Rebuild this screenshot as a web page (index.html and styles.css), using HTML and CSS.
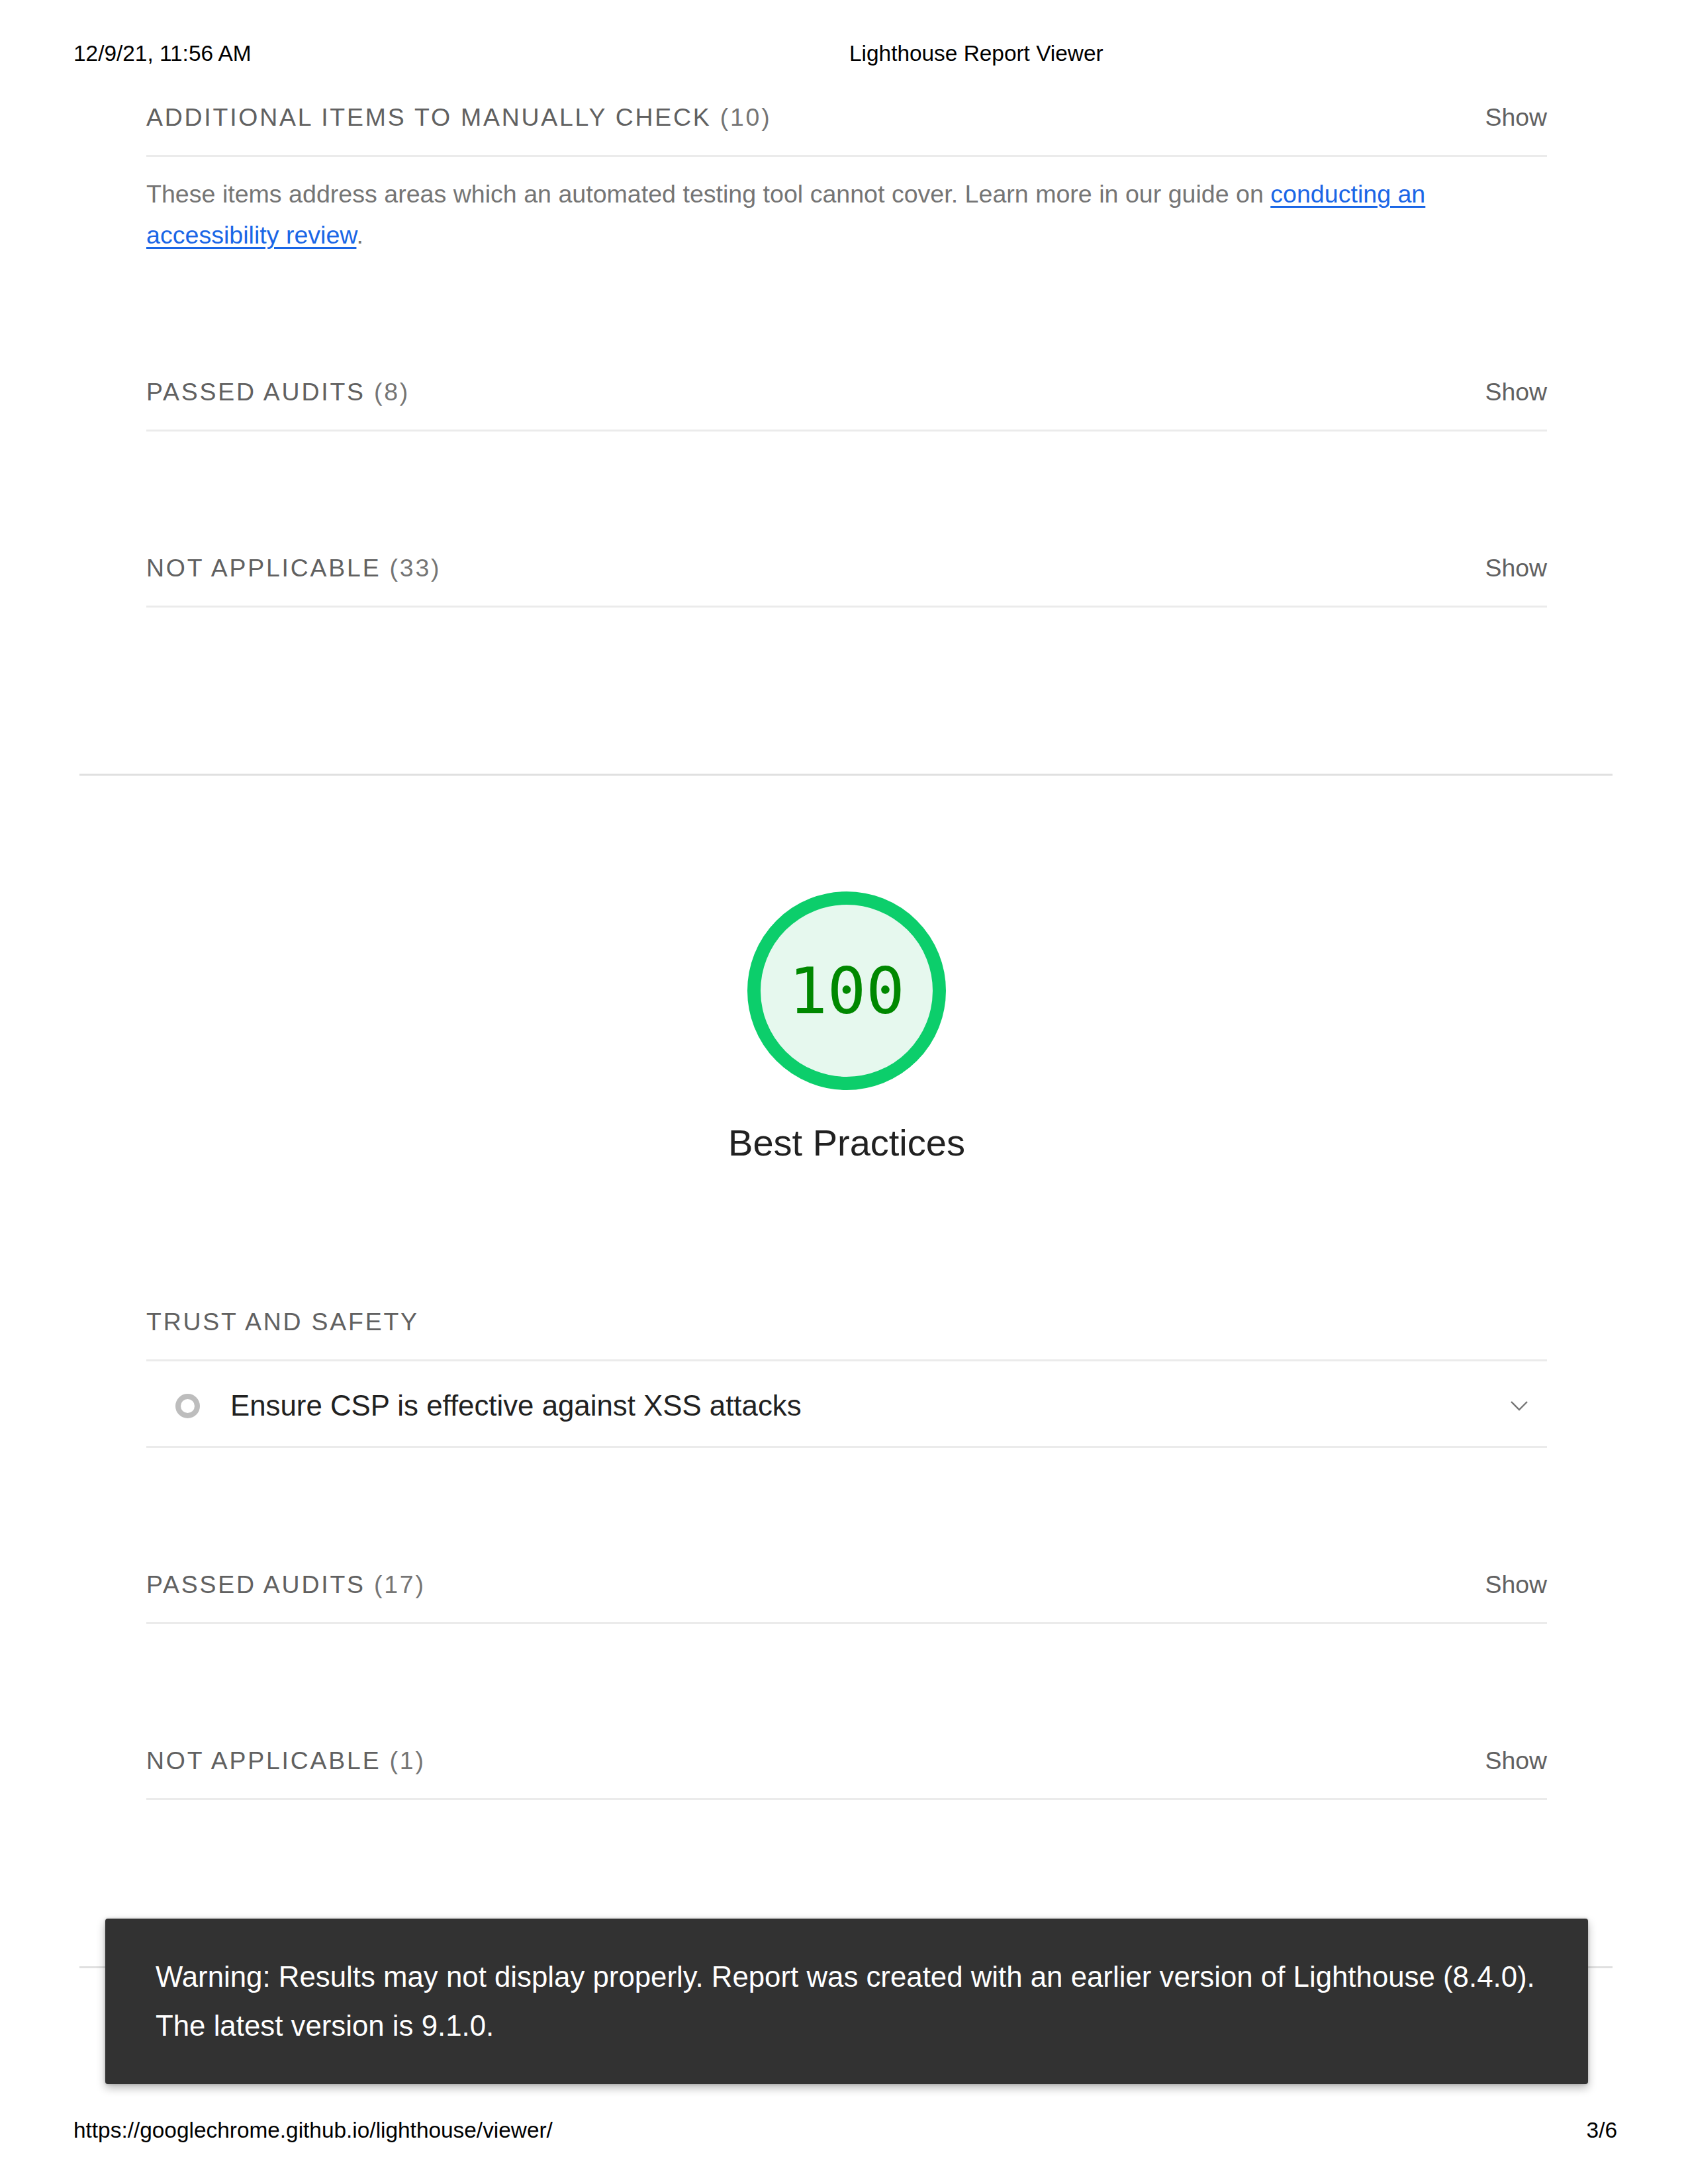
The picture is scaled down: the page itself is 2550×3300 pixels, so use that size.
FILE: index.html
```html
<!DOCTYPE html>
<html lang="en">
<head>
<meta charset="utf-8">
<title>Lighthouse Report Viewer</title>
<link rel="stylesheet" href="styles.css">
</head>
<body>
<header class="print-header">
  <span class="print-date">12/9/21, 11:56 AM</span>
  <span class="print-title">Lighthouse Report Viewer</span>
</header>

<main class="report">
  <section class="category category--tail">
    <div class="group">
      <div class="group-header">
        <span class="group-title">Additional items to manually check <span class="group-count">(10)</span></span>
        <span class="group-toggle">Show</span>
      </div>
      <p class="group-desc">These items address areas which an automated testing tool cannot cover. Learn more in our guide on <a href="#">conducting an accessibility review</a>.</p>
    </div>
    <div class="group">
      <div class="group-header">
        <span class="group-title">Passed audits <span class="group-count">(8)</span></span>
        <span class="group-toggle">Show</span>
      </div>
    </div>
    <div class="group">
      <div class="group-header">
        <span class="group-title">Not applicable <span class="group-count">(33)</span></span>
        <span class="group-toggle">Show</span>
      </div>
    </div>
  </section>

  <section class="category category--bp">
    <div class="score">
      <div class="gauge"><span class="gauge-value">100</span></div>
      <div class="score-label">Best Practices</div>
    </div>
    <div class="group group--first">
      <div class="group-header">
        <span class="group-title">Trust and Safety</span>
      </div>
      <div class="audit">
        <span class="audit-icon"></span>
        <span class="audit-title">Ensure CSP is effective against XSS attacks</span>
        <svg class="audit-chevron" width="28" height="16" viewBox="0 0 28 16"><path d="M2 2 L14 14 L26 2" fill="none" stroke="#757575" stroke-width="2.4"/></svg>
      </div>
    </div>
    <div class="group">
      <div class="group-header">
        <span class="group-title">Passed audits <span class="group-count">(17)</span></span>
        <span class="group-toggle">Show</span>
      </div>
    </div>
    <div class="group">
      <div class="group-header">
        <span class="group-title">Not applicable <span class="group-count">(1)</span></span>
        <span class="group-toggle">Show</span>
      </div>
    </div>
  </section>
</main>

<div class="toast">Warning: Results may not display properly. Report was created with an earlier version of Lighthouse (8.4.0). The latest version is 9.1.0.</div>

<footer class="print-footer">
  <span>https://googlechrome.github.io/lighthouse/viewer/</span>
  <span>3/6</span>
</footer>
</body>
</html>
```

FILE: styles.css
```css
html, body {
  margin: 0;
  padding: 0;
  background: #ffffff;
}
body {
  font-family: "Liberation Sans", Arial, sans-serif;
  color: #212121;
  position: relative;
  width: 2550px;
  min-height: 3300px;
}

.print-header {
  display: grid;
  grid-template-columns: 1172px 1fr;
  padding: 61px 0 0 111px;
  font-size: 33.4px;
  line-height: 40px;
  color: #000;
}

.report {
  width: 2316px;
  margin-left: 120px;
}

.category {
  padding: 0 99px 251px 101px;
  border-bottom: 3px solid #e0e0e0;
}
.category--tail {
  padding-top: 52px;
}
.category--bp {
  padding-top: 175px;
}

.group + .group {
  margin-top: 182px;
}
.group--first {
  margin-top: 214px;
}

.group-header {
  display: flex;
  justify-content: space-between;
  align-items: baseline;
  padding-bottom: 33px;
  border-bottom: 3px solid #ebebeb;
  font-size: 37.4px;
  line-height: 48px;
}
.group-title {
  text-transform: uppercase;
  letter-spacing: 2.8px;
  color: #616161;
}
.group-count {
  color: #757575;
}
.group-toggle {
  color: #616161;
}

.group-desc {
  margin: 25px 0 0;
  font-size: 37.6px;
  line-height: 62px;
  color: #757575;
}
.group-desc a {
  color: #1a66e6;
  text-decoration: underline;
  text-underline-offset: 5px;
  text-decoration-thickness: 3px;
}

.score {
  display: flex;
  flex-direction: column;
  align-items: center;
}
.gauge {
  box-sizing: border-box;
  width: 300px;
  height: 300px;
  border-radius: 50%;
  border: 20px solid #0cce6b;
  background: #e6f8ee;
  display: flex;
  align-items: center;
  justify-content: center;
}
.gauge-value {
  font-family: "DejaVu Sans Mono", "Liberation Mono", monospace;
  font-size: 97px;
  line-height: 1;
  color: #008800;
}
.score-label {
  margin-top: 48px;
  font-size: 56px;
  line-height: 64px;
  color: #212121;
}

.audit {
  display: flex;
  align-items: center;
  padding: 39px 28px 33px 44px;
  border-bottom: 3px solid #ebebeb;
}
.audit-icon {
  box-sizing: border-box;
  width: 37px;
  height: 37px;
  border-radius: 50%;
  border: 8px solid #bdbdbd;
  flex: none;
}
.audit-title {
  flex: 1;
  margin-left: 46px;
  font-size: 43.8px;
  line-height: 56px;
  color: #212121;
}
.audit-chevron {
  flex: none;
}

.toast {
  position: absolute;
  left: 159px;
  top: 2899px;
  width: 2240px;
  height: 250px;
  box-sizing: border-box;
  padding: 51px 50px 0 76px;
  background: #323232;
  color: #ffffff;
  font-size: 43.8px;
  line-height: 74px;
  border-radius: 4px;
  box-shadow: 0 6px 14px rgba(0, 0, 0, 0.28), 0 0 4px rgba(0, 0, 0, 0.2);
}

.print-footer {
  display: flex;
  justify-content: space-between;
  margin-top: 225px;
  padding: 0 107px 0 111px;
  font-size: 33.4px;
  line-height: 40px;
  color: #000;
}
```
